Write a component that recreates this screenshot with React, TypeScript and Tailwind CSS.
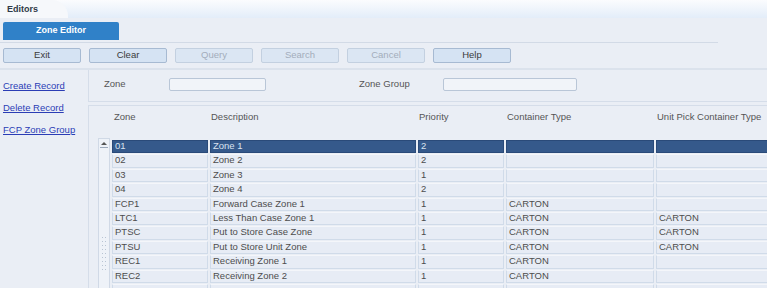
import React from "react";

const rows = [
    ["01", "Zone 1", "2", "", ""],
    ["02", "Zone 2", "2", "", ""],
    ["03", "Zone 3", "1", "", ""],
    ["04", "Zone 4", "2", "", ""],
    ["FCP1", "Forward Case Zone 1", "1", "CARTON", ""],
    ["LTC1", "Less Than Case Zone 1", "1", "CARTON", "CARTON"],
    ["PTSC", "Put to Store Case Zone", "1", "CARTON", "CARTON"],
    ["PTSU", "Put to Store Unit Zone", "1", "CARTON", "CARTON"],
    ["REC1", "Receiving Zone 1", "1", "CARTON", ""],
    ["REC2", "Receiving Zone 2", "1", "CARTON", ""],
    ["", "", "", "", ""],
];

const buttons = [
    { label: "Exit", on: true },
    { label: "Clear", on: true },
    { label: "Query", on: false },
    { label: "Search", on: false },
    { label: "Cancel", on: false },
    { label: "Help", on: true },
];

const cols = "grid grid-cols-[96px_206px_86px_148px_120px] gap-x-[2px]";

const App = () => {
    return (
        <div className="w-[767px] h-[288px] overflow-hidden bg-[#eaeef5] text-[9.5px] text-[#4d4d4d] font-['Liberation_Sans',Arial,sans-serif]">
            {/* header */}
            <div className="h-[18px] flex bg-gradient-to-b from-[#fbfcfe] to-[#e3edf9]">
                <div className="w-[68px] h-full bg-[#f6f8fb] rounded-tr-[16px] pl-[7px] pt-[3px] font-bold text-[9px] text-[#2f3a48]">
                    Editors
                </div>
            </div>

            {/* tab */}
            <div className="h-[24px] pt-[4px] pl-[3px]">
                <div className="w-[116px] h-[18px] bg-[#3081c8] rounded-t-[2px] flex items-center justify-center text-white font-bold text-[9px]">
                    Zone Editor
                </div>
            </div>
            <div className="w-[718px] border-t border-[#d2dae6]" />

            {/* toolbar */}
            <div className="h-[25px] flex gap-[8px] pl-[3px] pt-[5px]">
                {buttons.map((b) => (
                    <div
                        key={b.label}
                        className={`w-[78px] h-[15px] rounded-[2px] border flex items-center justify-center ${b.on ? "bg-[#d5e3f3] border-[#a7bad2] text-[#3a3a3a]" : "bg-[#dbe6f3] border-[#c3d0e0] text-[#a3adbb]"}`}
                    >
                        {b.label}
                    </div>
                ))}
            </div>
            <div className="border-t-[2px] border-[#dbe2ec]" />

            <div className="flex">
                {/* side links */}
                <div className="w-[88px] shrink-0 pl-[3px] pt-[9px] flex flex-col gap-[9px] text-[#2b3db5] underline">
                    <span className="leading-[13px]">Create Record</span>
                    <span className="leading-[13px]">Delete Record</span>
                    <span className="leading-[13px]">FCP Zone Group</span>
                </div>

                <div className="flex-1 min-w-0 flex flex-col">
                    {/* filter */}
                    <div className="h-[32px] pb-[2px] border-l border-b border-[#d5dde9] flex items-center text-[#555]">
                        <span className="ml-[15px] w-[65px]">Zone</span>
                        <div className="w-[97px] h-[13px] bg-[#f1f4f9] border border-[#b9c6d7] rounded-[2px]" />
                        <span className="ml-[93px] w-[84px]">Zone Group</span>
                        <div className="w-[134px] h-[13px] bg-[#f1f4f9] border border-[#b9c6d7] rounded-[2px]" />
                    </div>

                    {/* table */}
                    <div className="mt-[3px] h-[200px] border-l border-t border-[#d5dde9] flex">
                        <div className="w-[23px] shrink-0 pl-[9px] pt-[32px]">
                            <div className="w-[12px] h-[160px] bg-[#eef2f8] border border-[#d0d9e6] flex flex-col items-center">
                                <svg width="10" height="9" viewBox="0 0 10 9" className="mt-[1px]">
                                    <path d="M2 5 L5 2 L8 5 Z" fill="#555" />
                                    <line x1="1" y1="7.5" x2="9" y2="7.5" stroke="#9aa8ba" strokeWidth="1" />
                                </svg>
                                <div className="mt-[88px] flex flex-col gap-[3px]">
                                    {[0, 1, 2, 3, 4, 5, 6, 7, 8].map((i) => (
                                        <div key={i} className="flex gap-[2px]">
                                            <div className="w-[1px] h-[1px] bg-[#b8c4d3]" />
                                            <div className="w-[1px] h-[1px] bg-[#b8c4d3]" />
                                        </div>
                                    ))}
                                </div>
                            </div>
                        </div>
                        <div className="flex flex-col">
                            <div className={`${cols} h-[34px] items-start pt-[4px] text-[#555]`}>
                                <span className="pl-[2px]">Zone</span>
                                <span className="pl-[1px]">Description</span>
                                <span className="pl-[1px]">Priority</span>
                                <span className="pl-[1px]">Container Type</span>
                                <span className="pl-[1px] whitespace-nowrap">Unit Pick Container Type</span>
                            </div>
                            <div className={`${cols} auto-rows-[13.4px] gap-y-[1px]`}>
                                {rows.map((r, i) =>
                                    r.map((c, j) => (
                                        <div
                                            key={`${i}-${j}`}
                                            className={`border px-[2px] leading-[10px] whitespace-nowrap overflow-hidden ${i === 0 ? "bg-[#35598b] border-[#2a4a79] text-[#d9e3f0]" : "bg-[#e7ecf5] border-[#d0dbe9] border-t-[#f4f6fa]"}`}
                                        >
                                            {c}
                                        </div>
                                    ))
                                )}
                            </div>
                        </div>
                    </div>
                </div>
            </div>
        </div>
    );
};

export default App;
